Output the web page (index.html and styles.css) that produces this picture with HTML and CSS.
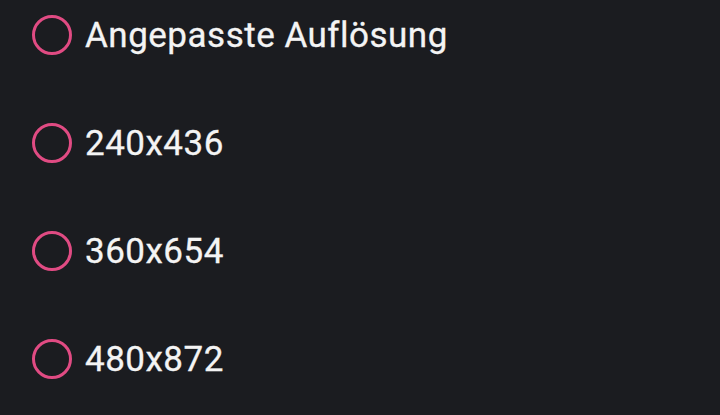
FILE: index.html
```html
<!DOCTYPE html>
<html>
<head>
<meta charset="utf-8">
<link rel="stylesheet" href="styles.css">
</head>
<body>
<ul class="options">
  <li class="option"><span class="radio"></span><span class="label">Angepasste Auflösung</span></li>
  <li class="option"><span class="radio"></span><span class="label">240x436</span></li>
  <li class="option"><span class="radio"></span><span class="label">360x654</span></li>
  <li class="option"><span class="radio"></span><span class="label">480x872</span></li>
</ul>
</body>
</html>
```
FILE: styles.css
```css
html, body {
  margin: 0;
  padding: 0;
  background: #1b1c20;
  width: 720px;
  height: 415px;
  overflow: hidden;
}
.options {
  list-style: none;
  margin: -19px 0 0 0;
  padding: 0 0 0 32px;
  display: flex;
  flex-direction: column;
}
.option {
  height: 108px;
  display: flex;
  align-items: center;
}
.radio {
  width: 40px;
  height: 40px;
  box-sizing: border-box;
  border: 3.5px solid #e14b83;
  border-radius: 50%;
  flex: none;
}
.label {
  margin-left: 13px;
  font-family: Roboto, "Noto Sans", sans-serif;
  font-size: 35px;
  letter-spacing: 0.5px;
  color: #f4f4f4;
  line-height: 1;
  -webkit-text-stroke: 0.3px #f4f4f4;
}
```
